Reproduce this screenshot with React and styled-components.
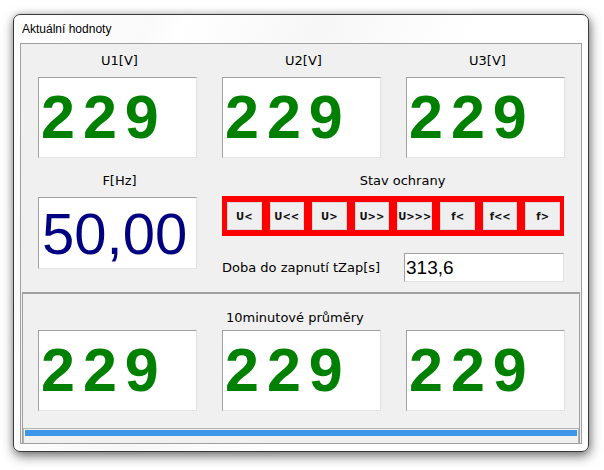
import React from "react";
import styled, { createGlobalStyle } from "styled-components";

const GlobalStyle = createGlobalStyle`
  html, body {
    margin: 0;
    padding: 0;
    background: #ffffff;
  }
  body {
    font-family: "DejaVu Sans", sans-serif;
  }
`;

const Page = styled.div`
  padding: 14px 0 0 13px;
  width: 604px;
  height: 470px;
  box-sizing: border-box;
`;

const Window = styled.div`
  width: 576px;
  height: 438px;
  box-sizing: border-box;
  border: 1px solid #3a3a3a;
  border-radius: 7px;
  background: linear-gradient(115deg, #ffffff 0%, #fafafa 18%, #ffffff 22%, #f7f7f7 40%, #ffffff 60%);
  box-shadow: 1px 4px 12px rgba(0, 0, 0, 0.55), 0 0 6px rgba(0, 0, 0, 0.15);
  padding: 0 6px 7px 6px;
  display: flex;
  flex-direction: column;
`;

const Title = styled.div`
  height: 28px;
  line-height: 29px;
  padding-left: 2px;
  font-family: "Liberation Sans", Arial, sans-serif;
  font-size: 12px;
  color: #000;
`;

const Panel = styled.div`
  flex: 1;
  border: 1px solid #a0a0a0;
  background: #f0f0f0;
  display: flex;
  flex-direction: column;
`;

const Upper = styled.div`
  display: grid;
  grid-template-columns: repeat(3, 159px);
  column-gap: 25px;
  padding: 9px 16px 10px 17px;
  height: 248px;
  box-sizing: border-box;
`;

const Lower = styled.div`
  flex: 1;
  margin: 0 1px;
  border: 1px solid #a0a0a0;
  border-top-width: 2px;
  border-bottom: none;
  display: flex;
  flex-direction: column;
`;

const LowerGrid = styled.div`
  display: grid;
  grid-template-columns: repeat(3, 159px);
  column-gap: 25px;
  padding: 16px 15px 0 15px;
`;

const Cell = styled.div`
  display: flex;
  flex-direction: column;
  grid-column: ${(p) => p.$span || "auto"};
  margin-top: ${(p) => p.$top || 0}px;
`;

const Label = styled.div`
  height: 16px;
  line-height: 16px;
  font-size: 13px;
  color: #000;
  text-align: ${(p) => p.$align || "center"};
  padding-left: ${(p) => p.$indent || 4}px;
  margin-bottom: ${(p) => p.$gap ?? 8}px;
  white-space: nowrap;
`;

const ValueBox = styled.div`
  height: ${(p) => p.$h || 81}px;
  box-sizing: border-box;
  background: #fff;
  border-style: solid;
  border-width: 1px;
  border-color: #a0a0a0 #e3e3e3 #e3e3e3 #a0a0a0;
  display: flex;
  align-items: center;
  padding-left: 2px;
  overflow: hidden;
`;

const Volt = styled.span`
  font-family: "Liberation Sans", Arial, sans-serif;
  font-weight: bold;
  font-size: 61px;
  letter-spacing: 8px;
  line-height: 1;
  color: #008000;
  margin-top: -1px;
`;

const Freq = styled.span`
  font-family: "Liberation Sans", Arial, sans-serif;
  font-size: 58px;
  line-height: 1;
  color: #000080;
  margin-left: 1px;
  margin-top: 2px;
`;

const AlarmBar = styled.div`
  height: 40px;
  box-sizing: border-box;
  background: #ff0000;
  padding: 6px 4px 6px 5px;
  display: flex;
  gap: 8px;
  margin-top: -1px;
  width: 342px;
`;

const AlarmButton = styled.div`
  flex: 1;
  background: #efefef;
  border: 1px solid #dadada;
  display: flex;
  align-items: center;
  justify-content: center;
  font-family: "DejaVu Sans", sans-serif;
  font-weight: bold;
  font-size: 10px;
  color: #111;
`;

const TimeRow = styled.div`
  display: flex;
  align-items: center;
  justify-content: space-between;
  margin-top: 17px;
  width: 342px;
`;

const TimeLabel = styled.span`
  font-size: 13px;
  color: #000;
`;

const TimeInput = styled.div`
  width: 160px;
  height: 29px;
  box-sizing: border-box;
  background: #fff;
  border-style: solid;
  border-width: 1px;
  border-color: #a0a0a0 #e3e3e3 #e3e3e3 #a0a0a0;
  font-family: "Liberation Sans", Arial, sans-serif;
  font-size: 19px;
  line-height: 27px;
  padding-left: 1px;
  color: #000;
`;

const Progress = styled.div`
  margin-top: 17px;
  height: 15px;
  box-sizing: border-box;
  border: 1px solid #b4b4b4;
  border-bottom: none;
  padding: 1px 1px 0 1px;
`;

const ProgressFill = styled.div`
  height: 6px;
  background: #3d97e8;
`;

const voltages = [
  { label: "U1[V]", value: "229" },
  { label: "U2[V]", value: "229" },
  { label: "U3[V]", value: "229" },
];

const alarms = ["U<", "U<<", "U>", "U>>", "U>>>", "f<", "f<<", "f>"];

const averages = ["229", "229", "229"];

export default function App() {
  return (
    <Page>
      <GlobalStyle />
      <Window>
        <Title>Aktuální hodnoty</Title>
        <Panel>
          <Upper>
            {voltages.map((v) => (
              <Cell key={v.label}>
                <Label>{v.label}</Label>
                <ValueBox>
                  <Volt>{v.value}</Volt>
                </ValueBox>
              </Cell>
            ))}
            <Cell $top={15}>
              <Label>F[Hz]</Label>
              <ValueBox $h={72}>
                <Freq>50,00</Freq>
              </ValueBox>
            </Cell>
            <Cell $span="2 / span 2" $top={15}>
              <Label $indent={18}>Stav ochrany</Label>
              <AlarmBar>
                {alarms.map((a) => (
                  <AlarmButton key={a}>{a}</AlarmButton>
                ))}
              </AlarmBar>
              <TimeRow>
                <TimeLabel>Doba do zapnutí tZap[s]</TimeLabel>
                <TimeInput>313,6</TimeInput>
              </TimeRow>
            </Cell>
          </Upper>
          <Lower>
            <LowerGrid>
              <Cell $span="2 / span 2">
                <Label $align="left" $indent={0} $gap={4}>
                  10minutové průměry
                </Label>
              </Cell>
              {averages.map((a, i) => (
                <Cell key={i}>
                  <ValueBox>
                    <Volt>{a}</Volt>
                  </ValueBox>
                </Cell>
              ))}
            </LowerGrid>
            <Progress>
              <ProgressFill />
            </Progress>
          </Lower>
        </Panel>
      </Window>
    </Page>
  );
}
